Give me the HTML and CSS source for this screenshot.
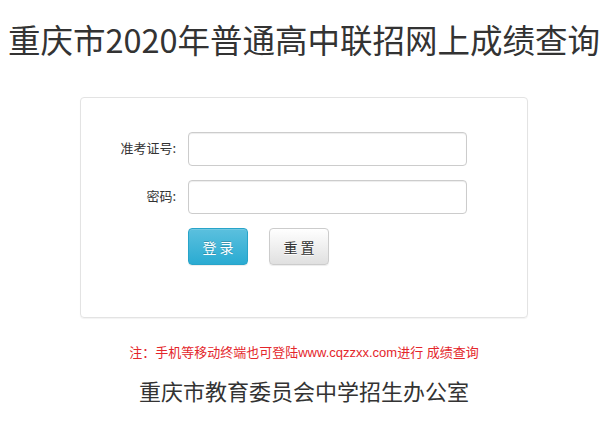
FILE: index.html
```html
<!DOCTYPE html>
<html lang="zh-CN">
<head>
<meta charset="utf-8">
<title>重庆市2020年普通高中联招网上成绩查询</title>
<link rel="stylesheet" href="styles.css">
</head>
<body>
<div class="page">
  <h1 class="title">重庆市2020年普通高中联招网上成绩查询</h1>
  <div class="card">
    <form class="form">
      <label class="label" for="zkz">准考证号:</label>
      <input class="input" id="zkz" type="text">
      <label class="label" for="pwd">密码:</label>
      <input class="input" id="pwd" type="password">
      <div class="actions">
        <button type="button" class="btn btn-info">登 录</button>
        <button type="reset" class="btn btn-default">重 置</button>
      </div>
    </form>
  </div>
  <p class="note">注：手机等移动终端也可登陆www.cqzzxx.com进行 成绩查询</p>
  <p class="footer">重庆市教育委员会中学招生办公室</p>
</div>
</body>
</html>
```
FILE: styles.css
```css
* { box-sizing: border-box; }
html, body { margin: 0; padding: 0; background: #fff; }
body {
  font-family: "Noto Sans CJK SC", "Liberation Sans", sans-serif;
  color: #333;
}
.page {
  padding-left: 5px;
  display: flex;
  flex-direction: column;
  align-items: center;
}
.title {
  margin: 0;
  padding-top: 19px;
  font-size: 32.5px;
  font-weight: normal;
  line-height: 40px;
  height: 59px;
  color: #333;
  white-space: nowrap;
}
.card {
  margin-top: 38px;
  width: 448px;
  height: 221px;
  border: 1px solid #e3e3e3;
  border-radius: 4px;
  box-shadow: 0 1px 1px rgba(0,0,0,0.05);
  padding-top: 34px;
}
.form {
  display: grid;
  grid-template-columns: 96px 279px;
  column-gap: 11px;
  row-gap: 14px;
  align-items: center;
}
.label {
  text-align: right;
  font-size: 13px;
  line-height: 16px;
  color: #333;
  padding-right: 1px;
  padding-bottom: 3px;
}
.input {
  width: 279px;
  height: 34px;
  border: 1px solid #ccc;
  border-radius: 4px;
  box-shadow: inset 0 1px 1px rgba(0,0,0,0.075);
  background: #fff;
  margin: 0;
}
.actions {
  grid-column: 2;
  display: flex;
  gap: 21px;
}
.btn {
  width: 60px;
  height: 37px;
  border-radius: 4px;
  font-family: "Noto Sans CJK SC", sans-serif;
  font-size: 14px;
  padding: 0;
  cursor: pointer;
}
.btn-info {
  color: #fff;
  border: 1px solid #28a4c9;
  background: linear-gradient(#5bc0de, #2aabd2);
  text-shadow: 0 -1px 0 rgba(0,0,0,0.2);
  box-shadow: inset 0 1px 0 rgba(255,255,255,0.15), 0 1px 1px rgba(0,0,0,0.075);
}
.btn-default {
  color: #333;
  border: 1px solid #ccc;
  background: linear-gradient(#fff, #e0e0e0);
  text-shadow: 0 1px 0 #fff;
  box-shadow: inset 0 1px 0 rgba(255,255,255,0.15), 0 1px 1px rgba(0,0,0,0.075);
}
.note {
  margin: 25px 0 0;
  font-size: 13px;
  line-height: 20px;
  color: #e4262b;
  font-family: "Liberation Sans", "Noto Sans CJK SC", sans-serif;
}
.footer {
  margin: 12px 0 0;
  font-size: 22px;
  line-height: 30px;
  color: #333;
}
```
